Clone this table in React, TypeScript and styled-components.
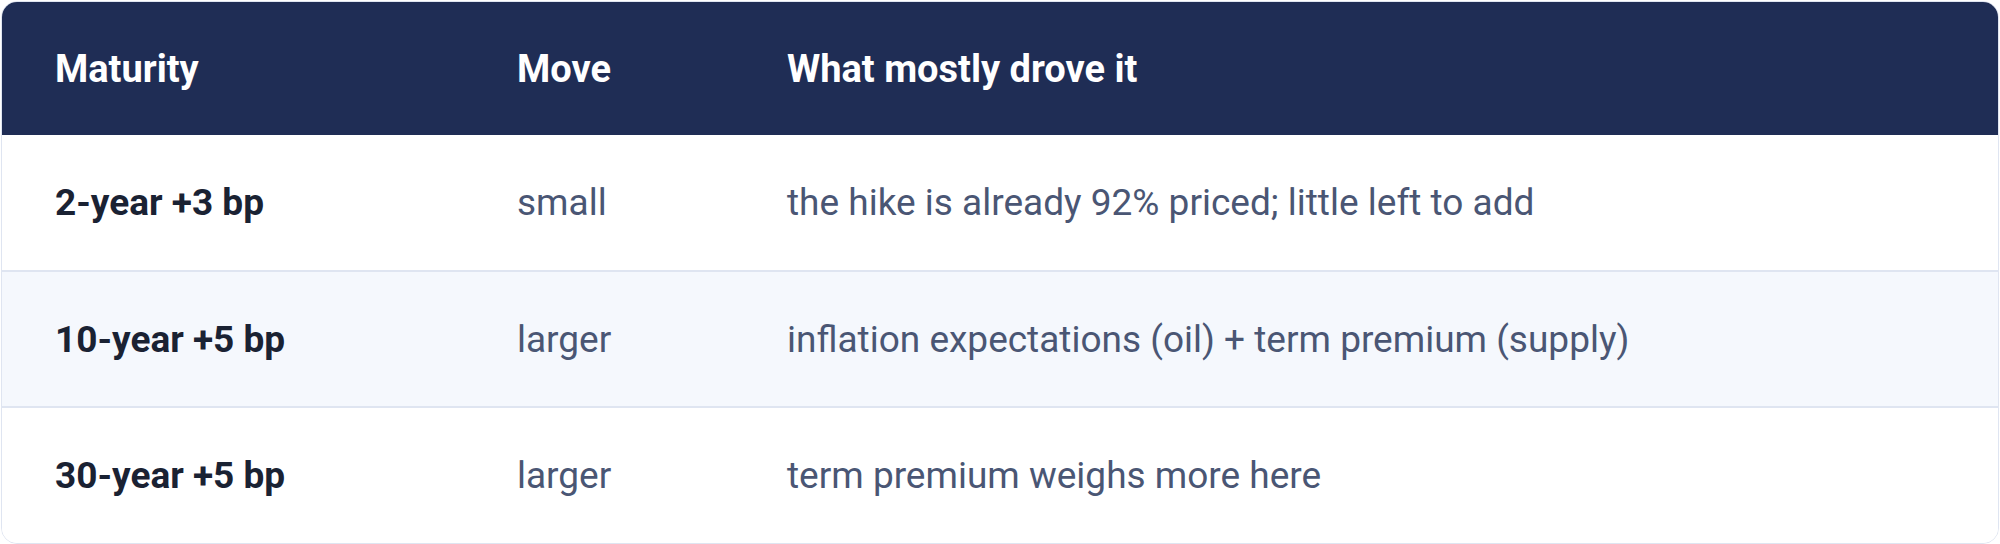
import styled, { createGlobalStyle } from "styled-components";

const GlobalStyle = createGlobalStyle`
  html, body {
    margin: 0;
    padding: 0;
    background: #ffffff;
  }
  body {
    font-family: Roboto, "Noto Sans", sans-serif;
  }
`;

const Page = styled.div`
  padding: 1px;
`;

const Card = styled.div`
  border: 1px solid #dfe5f1;
  border-radius: 16px;
  overflow: hidden;
  background: #ffffff;
`;

const Table = styled.table`
  width: 100%;
  border-collapse: collapse;
  table-layout: fixed;
`;

const HeadRow = styled.tr`
  background: #1f2d55;
`;

const HeadCell = styled.th<{ $width?: string }>`
  width: ${(p) => p.$width || "auto"};
  height: 133px;
  padding: 0 0 0 53px;
  text-align: left;
  color: #ffffff;
  font-size: 38px;
  font-weight: 700;
  box-sizing: border-box;
`;

const Row = styled.tr<{ $alt?: boolean }>`
  background: ${(p) => (p.$alt ? "#f5f8fd" : "#ffffff")};
  & + & {
    border-top: 2px solid #dfe5f1;
  }
`;

const Cell = styled.td<{ $strong?: boolean }>`
  height: 136px;
  padding: 0 0 0 53px;
  font-size: 37px;
  font-weight: ${(p) => (p.$strong ? 700 : 400)};
  color: ${(p) => (p.$strong ? "#1a2233" : "#4a5674")};
  box-sizing: border-box;
`;

const rows = [
  { maturity: "2-year +3 bp", move: "small", driver: "the hike is already 92% priced; little left to add" },
  { maturity: "10-year +5 bp", move: "larger", driver: "inflation expectations (oil) + term premium (supply)" },
  { maturity: "30-year +5 bp", move: "larger", driver: "term premium weighs more here" },
];

const App = () => {
  return (
    <>
      <GlobalStyle />
      <Page>
        <Card>
          <Table>
            <thead>
              <HeadRow>
                <HeadCell $width="462px">Maturity</HeadCell>
                <HeadCell $width="270px">Move</HeadCell>
                <HeadCell>What mostly drove it</HeadCell>
              </HeadRow>
            </thead>
            <tbody>
              {rows.map((r, i) => (
                <Row key={r.maturity} $alt={i % 2 === 1}>
                  <Cell $strong>{r.maturity}</Cell>
                  <Cell>{r.move}</Cell>
                  <Cell>{r.driver}</Cell>
                </Row>
              ))}
            </tbody>
          </Table>
        </Card>
      </Page>
    </>
  );
};

export default App;
